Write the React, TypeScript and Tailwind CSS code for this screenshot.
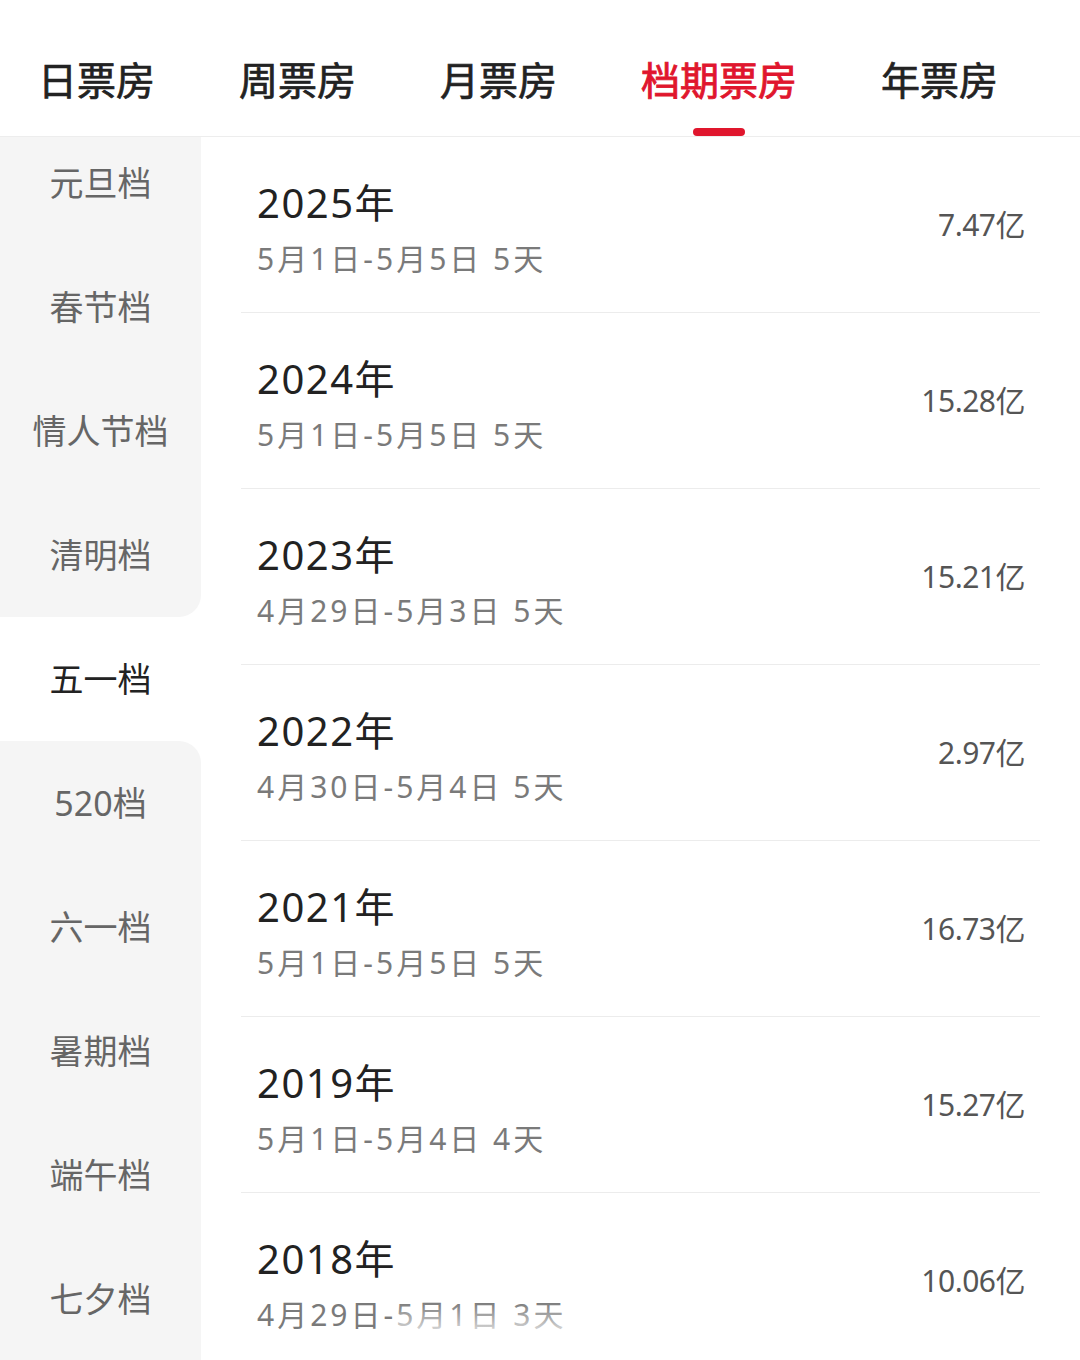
import React from "react";

const tabs = ["日票房", "周票房", "月票房", "档期票房", "年票房"];
const activeTab = 3;

const seasons = ["元旦档", "春节档", "情人节档", "清明档", "五一档", "520档", "六一档", "暑期档", "端午档", "七夕档"];
const activeSeason = 4;

const rows = [
  { year: "2025年", range: "5月1日-5月5日 5天", total: "7.47亿" },
  { year: "2024年", range: "5月1日-5月5日 5天", total: "15.28亿" },
  { year: "2023年", range: "4月29日-5月3日 5天", total: "15.21亿" },
  { year: "2022年", range: "4月30日-5月4日 5天", total: "2.97亿" },
  { year: "2021年", range: "5月1日-5月5日 5天", total: "16.73亿" },
  { year: "2019年", range: "5月1日-5月4日 4天", total: "15.27亿" },
  { year: "2018年", range: "4月29日-5月1日 3天", total: "10.06亿" },
];

function Tabs() {
  return (
    <div className="flex h-[137px] border-b border-[#ededed] bg-white">
      <div className="-ml-[4px] flex">
        {tabs.map((t, i) => (
          <div key={t} className="flex flex-col items-center px-[42px] pt-[60px]">
            <span
              className={`text-[39px] leading-[39px] ${
                i === activeTab
                  ? "text-[#e0162d] [-webkit-text-stroke:0.9px_#e0162d]"
                  : "text-[#222] [-webkit-text-stroke:0.7px_#222]"
              }`}
            >
              {t}
            </span>
            {i === activeTab && <div className="mt-[29px] h-[8px] w-[52px] rounded-full bg-[#e0162d]" />}
          </div>
        ))}
      </div>
    </div>
  );
}

function SeasonList() {
  return (
    <div className="w-[201px] shrink-0 overflow-hidden bg-white">
      <div className="-mt-[16px] flex flex-col">
        {seasons.map((s, i) => {
          const selected = i === activeSeason;
          let corner = "";
          if (i === activeSeason - 1) corner = "rounded-br-[22px]";
          if (i === activeSeason + 1) corner = "rounded-tr-[22px]";
          return (
            <div
              key={s}
              className={`flex h-[124px] items-center justify-center text-[34px] ${corner} ${
                selected ? "bg-white text-[#222]" : "bg-[#f5f5f5] text-[#666]"
              }`}
            >
              {s}
            </div>
          );
        })}
        <div className="h-[200px] bg-[#f5f5f5]" />
      </div>
    </div>
  );
}

function Row({ year, range, total }: { year: string; range: string; total: string }) {
  return (
    <div className="mx-[40px] flex h-[176px] shrink-0 items-center justify-between border-b border-[#ececec] pl-[16px] pr-[15px]">
      <div className="flex flex-col self-start pt-[46px]">
        <span className="text-[40px] leading-[39px] tracking-[1.5px] text-[#222]">{year}</span>
        <span className="mt-[21px] text-[30px] leading-[31px] tracking-[3px] text-[#7a7a7a]">{range}</span>
      </div>
      <span className="text-[30px] leading-[30px] tracking-[-0.5px] text-[#555]">{total}</span>
    </div>
  );
}

export default function App() {
  return (
    <div className="relative flex h-[1360px] w-[1080px] flex-col overflow-hidden bg-white font-['Noto_Sans','Noto_Sans_CJK_SC',sans-serif]">
      <Tabs />
      <div className="flex min-h-0 flex-1">
        <SeasonList />
        <div className="flex min-w-0 flex-1 flex-col">
          {rows.map((r) => (
            <Row key={r.year} {...r} />
          ))}
        </div>
      </div>
      <div className="pointer-events-none absolute left-[395px] top-[1302px] h-[58px] w-[300px] bg-gradient-to-b from-white/0 via-white/70 to-white" />
    </div>
  );
}
